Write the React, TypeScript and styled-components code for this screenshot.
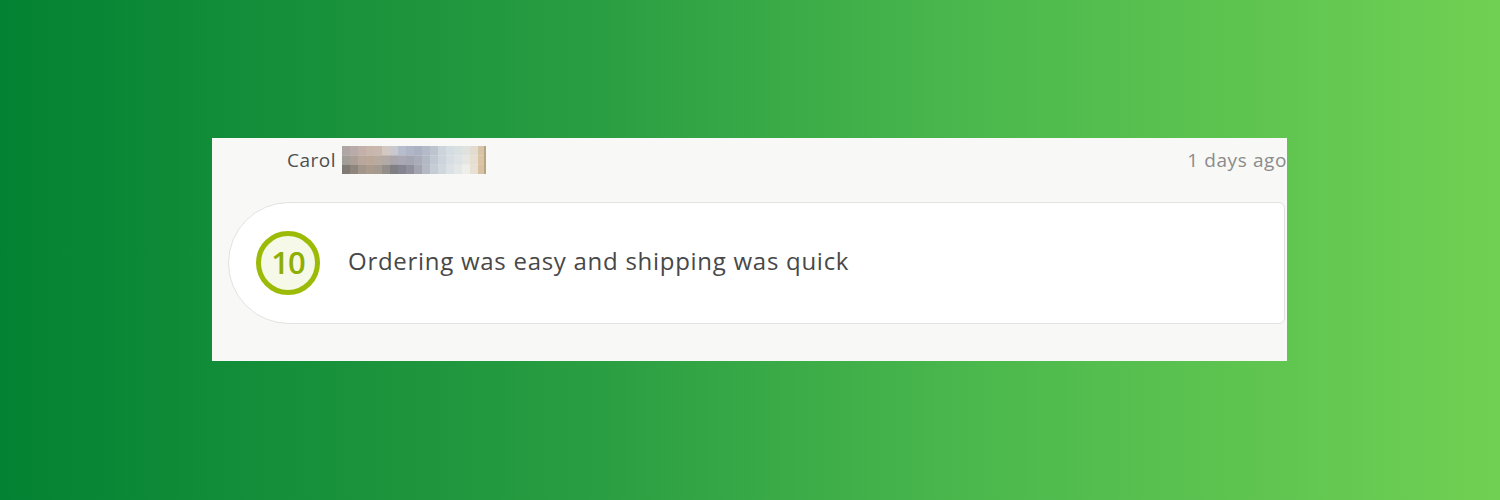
import React from "react";
import styled, { createGlobalStyle } from "styled-components";

const Global = createGlobalStyle`
  html, body { margin: 0; padding: 0; }
  body {
    width: 1500px;
    height: 500px;
    overflow: hidden;
    font-family: "Open Sans", Lato, "Liberation Sans", sans-serif;
  }
`;

const Page = styled.div`
  width: 1500px;
  height: 500px;
  background: linear-gradient(90deg, #038233 0%, #2a9e42 40%, #4bb84d 65%, #70d053 100%);
  display: flex;
  align-items: flex-start;
  justify-content: flex-start;
  box-sizing: border-box;
  padding: 138px 0 0 212px;
`;

const Card = styled.div`
  width: 1075px;
  height: 223px;
  background: #f8f8f7;
  box-sizing: border-box;
  padding: 0 2px 0 16px;
  display: flex;
  flex-direction: column;
`;

const Header = styled.div`
  height: 44px;
  display: flex;
  align-items: center;
  justify-content: space-between;
  padding-left: 59px;
`;

const Author = styled.div`
  display: flex;
  align-items: center;
  gap: 6px;
  color: #4f4f4f;
  font-size: 19px;
  letter-spacing: 0.5px;
`;

const Ago = styled.div`
  color: #8b8b8b;
  font-size: 19px;
  letter-spacing: 0.6px;
  margin-right: -2px;
`;

const Bubble = styled.div`
  margin-top: 20px;
  height: 122px;
  box-sizing: border-box;
  background: #ffffff;
  border: 1.5px solid #e2e2de;
  border-radius: 61px 6px 6px 61px;
  display: flex;
  align-items: center;
  padding-left: 27px;
  gap: 28px;
`;

const Score = styled.div`
  width: 64px;
  height: 64px;
  box-sizing: border-box;
  border-radius: 50%;
  border: 5px solid #9cbb07;
  background: #f6f9e7;
  color: #8eae00;
  font-size: 31px;
  font-weight: 600;
  display: flex;
  align-items: center;
  justify-content: center;
  letter-spacing: -1px;
  flex-shrink: 0;
  padding-bottom: 2px;
`;

const Comment = styled.div`
  color: #484848;
  font-size: 24px;
  letter-spacing: 0.72px;
  padding-bottom: 5px;
`;

const pix = [
  ["#b0a6a6","#b9abaa","#c2b0a9","#c8b5ab","#cab8ae","#d4c8c2","#c9c8cc","#b6bdcc","#b0b6c7","#adb2c2","#b5bac8","#bdc4cf","#cdd4dc","#d4dde1","#d9e0e2","#e0e2e0","#e2dbd0","#d6c3a8"],
  ["#a19d99","#ab9f98","#b9a79c","#bca89a","#b9aaa0","#b3aaa5","#aaa6ab","#a9a8b4","#a5a6b3","#aaadb9","#b2b8c4","#c1c8d2","#cdd5dc","#d6dee3","#dde3e4","#e6e7e3","#e6ded0","#d9c4a6"],
  ["#7f7a73","#8e867c","#a2968a","#aa9b8d","#a59a8f","#948e8b","#7f7f84","#858591","#8f909c","#a2a5b0","#b4b9c3","#c5ccd4","#d1d8dd","#dbe1e4","#e3e7e7","#eeeeea","#e8e0d2","#d7c1a2"],
];

const Blur = () => (
  <svg width="144" height="28" viewBox="0 0 144 28" style={{ display: "block" }}>
    {pix.map((row, r) =>
      row.map((c, i) => (
        <rect key={`${r}-${i}`} x={i * 8} y={r * 9.34} width={8.2} height={9.5} fill={c} />
      ))
    )}
    <rect x={142} y={0} width={2} height={28} fill="#b8a382" />
  </svg>
);

export default function App() {
  return (
    <>
      <Global />
      <Page>
        <Card>
          <Header>
            <Author>
              <span>Carol</span>
              <Blur />
            </Author>
            <Ago>1 days ago</Ago>
          </Header>
          <Bubble>
            <Score>10</Score>
            <Comment>Ordering was easy and shipping was quick</Comment>
          </Bubble>
        </Card>
      </Page>
    </>
  );
}
